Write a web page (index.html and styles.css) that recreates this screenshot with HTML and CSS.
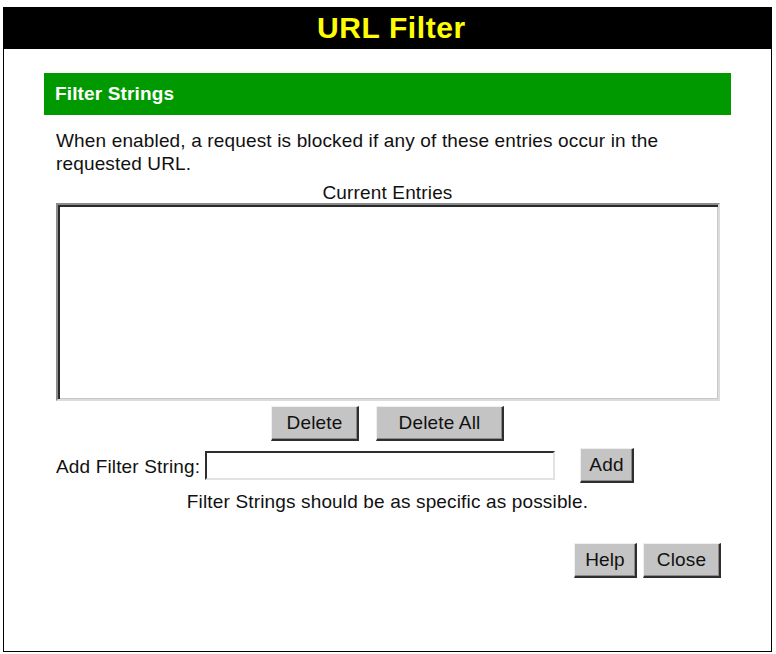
FILE: index.html
```html
<!DOCTYPE html>
<html>
<head>
<meta charset="utf-8">
<title>URL Filter</title>
<link rel="stylesheet" href="styles.css">
</head>
<body>
<div class="frame">
  <div class="header">URL Filter</div>
  <div class="panel">
    <div class="section-bar">Filter Strings</div>
    <p class="desc">When enabled, a request is blocked if any of these entries occur in the requested URL.</p>
    <div class="label-center">Current Entries</div>
    <div class="entries"></div>
    <div class="btn-row">
      <button class="btn btn-delete">Delete</button>
      <button class="btn btn-delete-all">Delete All</button>
    </div>
    <div class="add-row">
      <span class="add-label">Add Filter String:</span>
      <input class="text-input" type="text">
      <button class="btn btn-add">Add</button>
    </div>
    <div class="note">Filter Strings should be as specific as possible.</div>
    <div class="footer-row">
      <button class="btn btn-help">Help</button>
      <button class="btn btn-close">Close</button>
    </div>
  </div>
</div>
</body>
</html>
```

FILE: styles.css
```css
* { box-sizing: border-box; }

html, body {
  margin: 0;
  padding: 0;
  background: #ffffff;
}

body {
  font-family: "Liberation Sans", Arial, sans-serif;
  font-size: 19px;
  letter-spacing: 0.15px;
  color: #111;
}

.frame {
  margin: 7px 4px 0 3px;
  height: 645px;
  border-left: 1px solid #000;
  border-right: 1px solid #000;
  border-bottom: 1px solid #000;
  background: #fff;
}

.header {
  height: 42px;
  background: #000;
  color: #ffff00;
  font-weight: bold;
  font-size: 30px;
  letter-spacing: 0.6px;
  line-height: 42px;
  text-align: center;
  margin: 0 -1px;
  padding-left: 8px;
}

.panel {
  margin: 24px 40px 0 40px;
}

.section-bar {
  height: 42px;
  line-height: 42px;
  background: #009a00;
  color: #fff;
  font-weight: bold;
  padding-left: 11px;
}

.desc {
  margin: 14px 11px 0 12px;
  line-height: 23px;
}

.label-center {
  margin-top: 7px;
  line-height: 21px;
  text-align: center;
}

.entries {
  margin-left: 12px;
  width: 664px;
  height: 198px;
  border-top: 2px solid #8c8c8c;
  border-left: 2px solid #8c8c8c;
  border-right: 2px solid #dcdcdc;
  border-bottom: 2px solid #dcdcdc;
  box-shadow: inset 2px 2px 0 #2a2a2a, inset -1px -1px 0 #c8c8c8;
  background: #fff;
}

.btn {
  font-family: "Liberation Sans", Arial, sans-serif;
  font-size: 19px;
  letter-spacing: 0.15px;
  color: #111;
  background: #c4c4c4;
  height: 35px;
  padding: 0;
  border-top: 1px solid #efefef;
  border-left: 1px solid #efefef;
  border-right: 2px solid #2e2e2e;
  border-bottom: 2px solid #2e2e2e;
  border-radius: 0;
  box-shadow: inset -1px -1px 0 #8a8a8a;
  text-align: center;
}

.btn-row {
  display: flex;
  justify-content: center;
  gap: 17px;
  margin-top: 5px;
}

.btn-delete { width: 88px; }
.btn-delete-all { width: 128px; }
.btn-add { width: 54px; }
.btn-help { width: 63px; }
.btn-close { width: 78px; }

.add-row {
  display: flex;
  align-items: center;
  margin: 7px 0 0 12px;
  height: 35px;
}

.add-label {
  width: 149px;
  padding-top: 2px;
}

.text-input {
  width: 350px;
  height: 29px;
  margin-right: 25px;
  border-top: 2px solid #2e2e2e;
  border-left: 2px solid #2e2e2e;
  border-right: 2px solid #e2e2e2;
  border-bottom: 2px solid #e2e2e2;
  background: #fff;
  padding: 0;
  font-family: "Liberation Sans", Arial, sans-serif;
  font-size: 19px;
}

.note {
  margin-top: 8px;
  line-height: 22px;
  text-align: center;
}

.footer-row {
  display: flex;
  justify-content: flex-end;
  gap: 6px;
  margin-top: 30px;
  padding-right: 10px;
}
```
